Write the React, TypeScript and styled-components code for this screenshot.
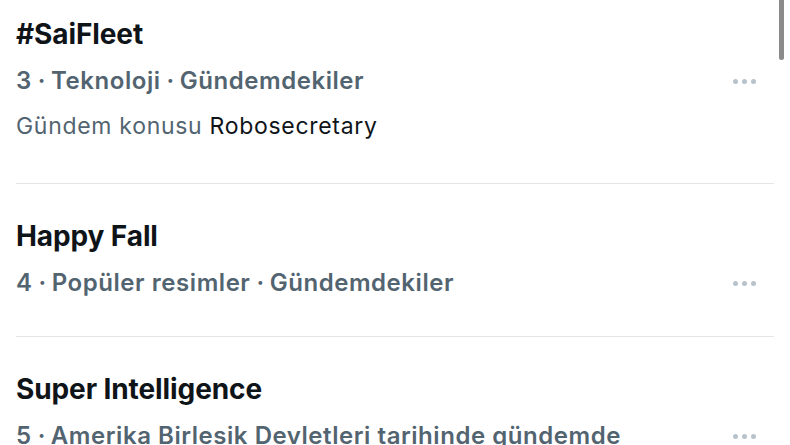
import React from "react";
import styled, { createGlobalStyle } from "styled-components";

const Global = createGlobalStyle`
  html, body { margin: 0; padding: 0; background: #ffffff; overflow: hidden; }
  body { font-family: Inter, "Noto Sans", "Liberation Sans", sans-serif; -webkit-font-smoothing: antialiased; }
`;

const Page = styled.div`
  position: relative;
  width: 790px;
  height: 445px;
  overflow: hidden;
  background: #ffffff;
`;

const List = styled.div`
  display: flex;
  flex-direction: column;
  margin-top: -18px;
  padding: 0 16px;
`;

const Item = styled.div`
  display: flex;
  flex-direction: column;
  padding: 30px 0 30px;
  border-bottom: 1px solid #e4e7ea;
  &:last-child { border-bottom: none; }
`;

const Title = styled.div`
  font-size: 28px;
  line-height: 46px;
  font-weight: 700;
  color: #0f1419;
  letter-spacing: -0.1px;
  margin-top: -1px;
`;

const MetaRow = styled.div`
  display: flex;
  align-items: center;
  justify-content: space-between;
  height: 46px;
  margin-top: 1px;
`;

const Meta = styled.div`
  font-size: 24px;
  line-height: 46px;
  font-weight: 600;
  color: #536471;
  letter-spacing: 0.55px;
  white-space: nowrap;
`;

const Sep = styled.span`
  margin: 0 5px 0 6px;
`;

const Topic = styled.div`
  font-size: 23px;
  line-height: 44px;
  font-weight: 400;
  color: #536471;
  letter-spacing: 0.7px;
  margin-bottom: 5px;
`;

const Strong = styled.span`
  color: #0f1419;
`;

const More = styled.button`
  display: flex;
  align-items: center;
  gap: 4px;
  border: none;
  background: transparent;
  padding: 0;
  margin-right: 18px;
`;

const Dot = styled.span`
  width: 5px;
  height: 5px;
  border-radius: 50%;
  background: #b7c2ca;
`;

const Scrollbar = styled.div`
  position: absolute;
  right: 6px;
  top: -6px;
  width: 5px;
  height: 66px;
  border-radius: 3px;
  background: #8a8a8a;
`;

type Trend = { title: string; meta: string[]; topic?: string };

const trends: Trend[] = [
  { title: "#SaiFleet", meta: ["3", "Teknoloji", "Gündemdekiler"], topic: "Robosecretary" },
  { title: "Happy Fall", meta: ["4", "Popüler resimler", "Gündemdekiler"] },
  { title: "Super Intelligence", meta: ["5", "Amerika Birlesik Devletleri tarihinde gündemde"] },
];

export default function App() {
  return (
    <Page>
      <Global />
      <List>
        {trends.map((t) => (
          <Item key={t.title}>
            <Title>{t.title}</Title>
            <MetaRow>
              <Meta>
                {t.meta.map((part, i) => (
                  <React.Fragment key={i}>
                    {i > 0 && <Sep>·</Sep>}
                    {part}
                  </React.Fragment>
                ))}
              </Meta>
              <More aria-label="Daha fazla">
                <Dot />
                <Dot />
                <Dot />
              </More>
            </MetaRow>
            {t.topic && (
              <Topic>
                Gündem konusu <Strong>{t.topic}</Strong>
              </Topic>
            )}
          </Item>
        ))}
      </List>
      <Scrollbar />
    </Page>
  );
}
